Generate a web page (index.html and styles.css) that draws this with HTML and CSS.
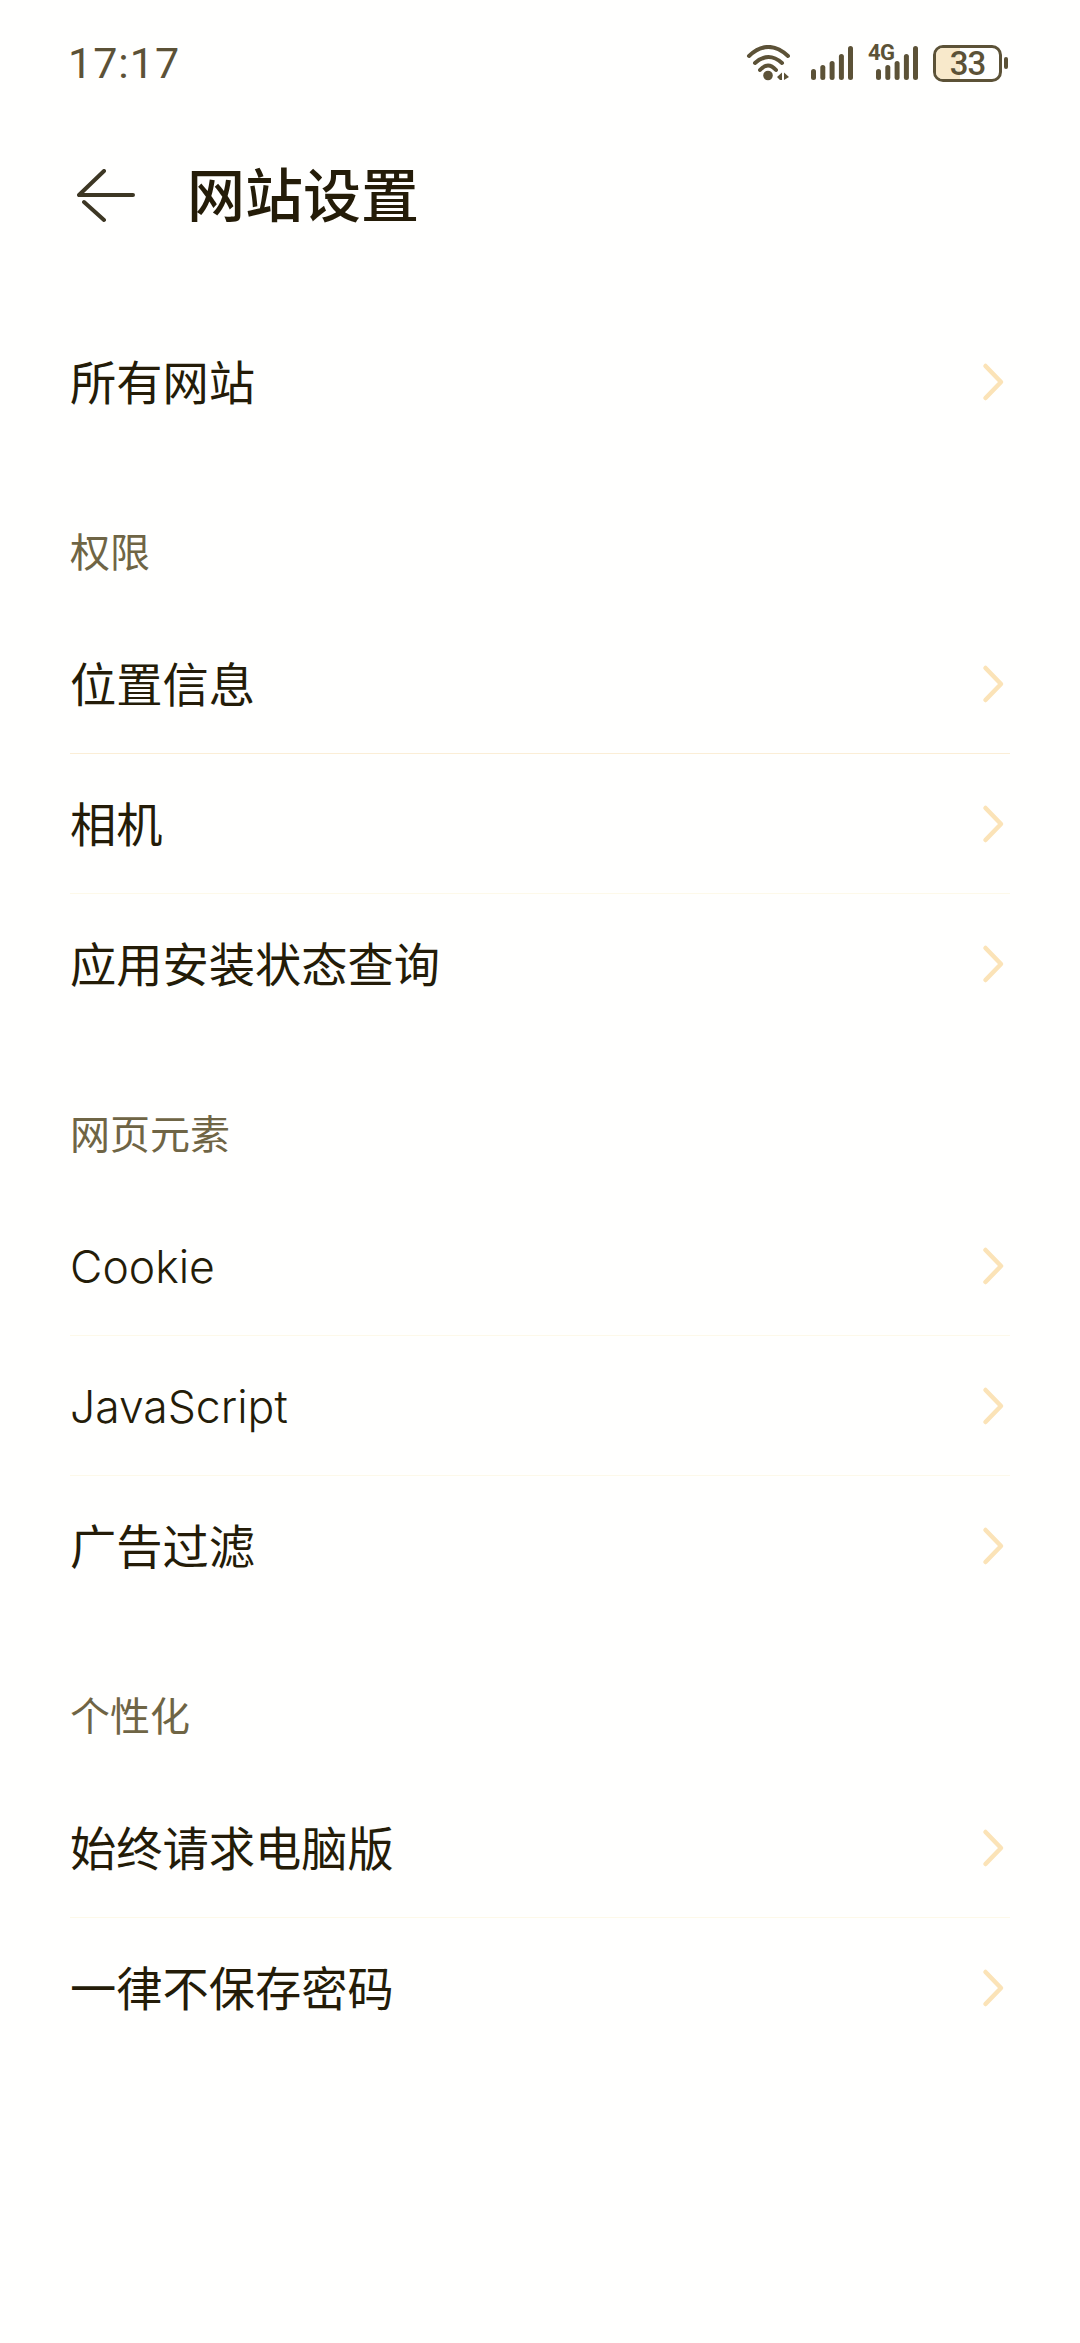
FILE: index.html
```html
<!DOCTYPE html>
<html lang="zh-CN">
<head>
    <meta charset="UTF-8">
    <meta name="viewport" content="width=device-width, initial-scale=1.0">
    <title>网站设置</title>
    <link rel="stylesheet" href="styles.css">
</head>
<body>
    <div class="status-bar">
        <span class="time">17:17</span>
        <div class="status-icons">
            <svg class="icon-wifi" width="44" height="36" viewBox="0 0 44 36">
                <path d="M3 11 Q22.5 -7 42 11 M9 18 Q22.5 6 36 18 M14 25 Q22 16 30 25" fill="none" stroke="#5c5237" stroke-width="4" stroke-linecap="round"/>
                <circle cx="22" cy="30.5" r="4.8" fill="#5c5237"/>
                <path d="M31 32 L36 27.5 V35 H34 Z M38 27.5 L43 32 L38 35 Z" fill="#5c5237"/>
            </svg>
            <svg class="icon-signal" width="44" height="36" viewBox="0 0 44 36">
                <rect x="1" y="24" width="5" height="11" rx="2.5"/>
                <rect x="10.3" y="20" width="5" height="15" rx="2.5"/>
                <rect x="19.6" y="16" width="5" height="19" rx="2.5"/>
                <rect x="28.9" y="9" width="5" height="26" rx="2.5"/>
                <rect x="38" y="1" width="5" height="34" rx="2.5"/>
            </svg>
            <div class="signal-4g">
                <span class="label-4g">4G</span>
                <svg class="icon-signal" width="44" height="36" viewBox="0 0 44 36">
                    <rect x="1" y="24" width="5" height="11" rx="2.5"/>
                    <rect x="10.3" y="20" width="5" height="15" rx="2.5"/>
                    <rect x="19.6" y="16" width="5" height="19" rx="2.5"/>
                    <rect x="28.9" y="9" width="5" height="26" rx="2.5"/>
                    <rect x="38" y="1" width="5" height="34" rx="2.5"/>
                </svg>
            </div>
            <div class="battery">
                <div class="battery-body">
                    <div class="battery-fill"></div>
                    <span class="battery-text">33</span>
                </div>
                <div class="battery-nub"></div>
            </div>
        </div>
    </div>

    <div class="toolbar">
        <svg class="back" width="60" height="56" viewBox="0 0 60 56">
            <path d="M27 2 L2 26 H56 M7 33 L27 51" fill="none" stroke="#3d3724" stroke-width="4" stroke-linecap="round" stroke-linejoin="round"/>
        </svg>
        <h1 class="page-title">网站设置</h1>
    </div>

    <div class="group group-first">
        <div class="row"><span class="label">所有网站</span><svg class="arrow" width="24" height="40" viewBox="0 0 24 40"><path d="M4.5 4 L20 20 L4.5 36"/></svg></div>
    </div>

    <div class="section-title">权限</div>
    <div class="group">
        <div class="row line-a"><span class="label">位置信息</span><svg class="arrow" width="24" height="40" viewBox="0 0 24 40"><path d="M4.5 4 L20 20 L4.5 36"/></svg></div>
        <div class="row line-b"><span class="label">相机</span><svg class="arrow" width="24" height="40" viewBox="0 0 24 40"><path d="M4.5 4 L20 20 L4.5 36"/></svg></div>
        <div class="row"><span class="label">应用安装状态查询</span><svg class="arrow" width="24" height="40" viewBox="0 0 24 40"><path d="M4.5 4 L20 20 L4.5 36"/></svg></div>
    </div>

    <div class="section-title">网页元素</div>
    <div class="group">
        <div class="row line-b"><span class="label latin">Cookie</span><svg class="arrow" width="24" height="40" viewBox="0 0 24 40"><path d="M4.5 4 L20 20 L4.5 36"/></svg></div>
        <div class="row line-b"><span class="label latin">JavaScript</span><svg class="arrow" width="24" height="40" viewBox="0 0 24 40"><path d="M4.5 4 L20 20 L4.5 36"/></svg></div>
        <div class="row"><span class="label">广告过滤</span><svg class="arrow" width="24" height="40" viewBox="0 0 24 40"><path d="M4.5 4 L20 20 L4.5 36"/></svg></div>
    </div>

    <div class="section-title">个性化</div>
    <div class="group">
        <div class="row line-b"><span class="label">始终请求电脑版</span><svg class="arrow" width="24" height="40" viewBox="0 0 24 40"><path d="M4.5 4 L20 20 L4.5 36"/></svg></div>
        <div class="row"><span class="label">一律不保存密码</span><svg class="arrow" width="24" height="40" viewBox="0 0 24 40"><path d="M4.5 4 L20 20 L4.5 36"/></svg></div>
    </div>
</body>
</html>
```

FILE: styles.css
```css
body{
    margin: 0px;
    height: 2343px;
    overflow: hidden;
    background-color: #fffffe;
    color: #241c08;
    font-family: "Roboto", "Noto Sans CJK SC", sans-serif;
}
.status-bar{
    display: flex;
    justify-content: space-between;
    align-items: center;
    height: 126px;
    padding: 0px 72px 0px 68px;
    box-sizing: border-box;
}
.time{
    font-size: 43px;
    letter-spacing: 1px;
    color: #5c5237;
}
.status-icons{
    display: flex;
    align-items: center;
    gap: 20px;
}
.icon-signal{
    display: block;
    fill: #5c5237;
}
.icon-wifi{
    display: block;
}
.signal-4g{
    position: relative;
    margin-left: 1px;
}
.label-4g{
    position: absolute;
    left: -7px;
    top: -1px;
    font-size: 22px;
    font-weight: 700;
    letter-spacing: -0.5px;
    line-height: 18px;
    color: #5c5237;
}
.battery{
    display: flex;
    align-items: center;
    gap: 2px;
    margin-left: -6px;
}
.battery-body{
    position: relative;
    display: flex;
    justify-content: center;
    align-items: center;
    width: 69px;
    height: 37px;
    box-sizing: border-box;
    border: 3px solid #5c5237;
    border-radius: 10px;
    overflow: hidden;
}
.battery-fill{
    position: absolute;
    left: 0px;
    top: 0px;
    width: 38%;
    height: 100%;
    background-color: #f8e9cb;
}
.battery-text{
    position: relative;
    font-size: 33px;
    font-weight: 500;
    letter-spacing: -1px;
    color: #5c5237;
}
.battery-nub{
    width: 4px;
    height: 12px;
    border-radius: 2px;
    background-color: #5c5237;
}
.toolbar{
    display: flex;
    align-items: center;
    height: 140px;
    padding-left: 77px;
}
.back{
    display: block;
    margin-top: 1px;
    margin-right: 50px;
}
.page-title{
    margin: 0px;
    padding-bottom: 8px;
    font-size: 58px;
    font-weight: 500;
    font-family: "Noto Sans CJK SC", sans-serif;
}
.group-first{
    margin-top: 46px;
}
.section-title{
    box-sizing: border-box;
    padding: 74px 0px 0px 70px;
    height: 162px;
    line-height: 48px;
    font-size: 40px;
    color: #6f6545;
    font-family: "Noto Sans CJK SC", sans-serif;
}
.row{
    display: flex;
    justify-content: space-between;
    align-items: center;
    height: 140px;
    box-sizing: border-box;
    margin: 0px 70px;
    font-size: 46.25px;
    font-family: "Noto Sans CJK SC", sans-serif;
}
.label{
    padding-bottom: 5px;
}
.latin{
    padding-bottom: 0px;
    padding-top: 2px;
    font-family: "Inter", sans-serif;
    font-size: 44.5px;
    font-weight: 350;
}
.line-a{
    border-bottom: 1.5px solid #fbeed6;
}
.line-b{
    border-bottom: 1.5px solid #fdf9e9;
}
.arrow{
    display: block;
    margin-right: 5px;
    fill: none;
    stroke: #fbe3b7;
    stroke-width: 4.5;
    stroke-linecap: round;
    stroke-linejoin: round;
}
```
